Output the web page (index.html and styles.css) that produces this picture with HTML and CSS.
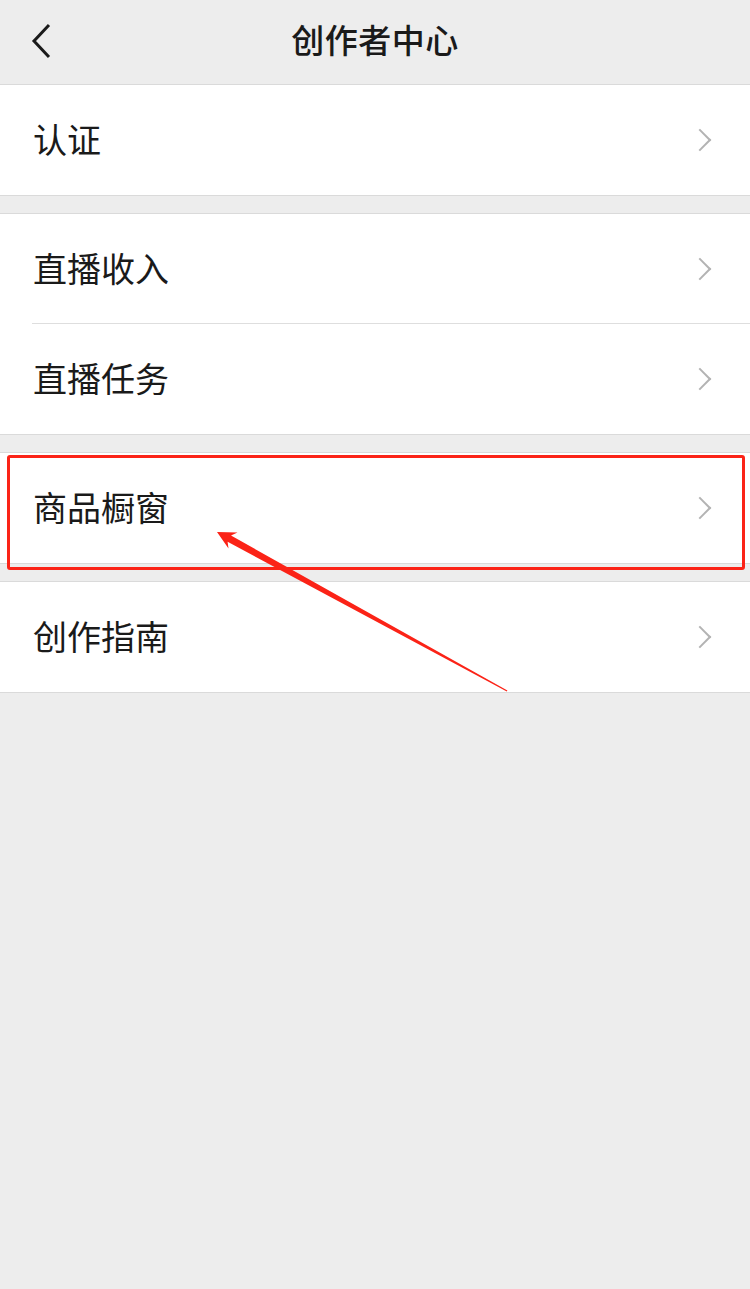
FILE: index.html
```html
<!DOCTYPE html>
<html lang="zh-CN">
<head>
    <meta charset="UTF-8">
    <meta name="viewport" content="width=device-width, initial-scale=1.0">
    <title>创作者中心</title>
    <link rel="stylesheet" href="styles.css">
</head>
<body>
    <!-- Header -->
    <header class="top-bar">
        <span class="back">
            <svg width="24" height="36" viewBox="0 0 24 36"><polyline points="19,2 4,18 19,34" fill="none" stroke="#1a1a1a" stroke-width="3" stroke-linejoin="miter"/></svg>
        </span>
        <h1>创作者中心</h1>
    </header>

    <!-- Menu groups -->
    <div class="group">
        <div class="row"><span>认证</span><i class="chev"></i></div>
    </div>

    <div class="group">
        <div class="row"><span>直播收入</span><i class="chev"></i></div>
        <div class="row"><span>直播任务</span><i class="chev"></i></div>
    </div>

    <div class="group">
        <div class="row"><span>商品橱窗</span><i class="chev"></i></div>
    </div>

    <div class="group">
        <div class="row"><span>创作指南</span><i class="chev"></i></div>
    </div>

    <!-- Annotation: red box + arrow -->
    <div class="mark-box"></div>
    <svg class="mark-arrow" width="750" height="1289" viewBox="0 0 750 1289">
        <polygon fill="#fb2317" points="217,532 237.5,532.5 231,535.6 507.4,690.6 506.8,691.6 227.6,541.8 228.5,548.5"/>
    </svg>
</body>
</html>
```

FILE: styles.css
```css
body {
    margin: 0;
    background-color: #ededed;
    font-family: "Noto Sans CJK SC", "Noto Sans", sans-serif;
    color: #1a1a1a;
    position: relative;
    min-height: 1289px;
}

.top-bar {
    height: 84px;
    display: flex;
    align-items: center;
    justify-content: center;
    position: relative;
}
.top-bar h1 {
    margin: 0 0 6px;
    font-size: 33px;
    font-weight: 500;
    letter-spacing: 0.5px;
}
.back {
    position: absolute;
    left: 30px;
    top: 23px;
    display: flex;
}

.group {
    background-color: #fff;
    border-top: 1px solid #dadada;
    border-bottom: 1px solid #dadada;
    margin-bottom: 17px;
}
.row {
    height: 110px;
    box-sizing: border-box;
    display: flex;
    align-items: center;
    justify-content: space-between;
    padding: 0 37px 3px 33px;
    font-size: 34px;
    position: relative;
}
.chev {
    width: 14px;
    height: 14px;
    border-top: 2.5px solid #b3b3b3;
    border-right: 2.5px solid #b3b3b3;
    transform: rotate(45deg);
    margin: 3px 5px 0 0;
}

/* divider between rows starts after the left padding */
.row + .row::after {
    content: "";
    position: absolute;
    top: -1px;
    left: 32px;
    right: 0;
    height: 1px;
    background-color: #dedede;
}

.mark-box {
    position: absolute;
    left: 7px;
    top: 455px;
    width: 732px;
    height: 109px;
    border: 3px solid #fb2317;
    border-radius: 3px;
}
.mark-arrow {
    position: absolute;
    left: 0;
    top: 0;
    pointer-events: none;
}
```
